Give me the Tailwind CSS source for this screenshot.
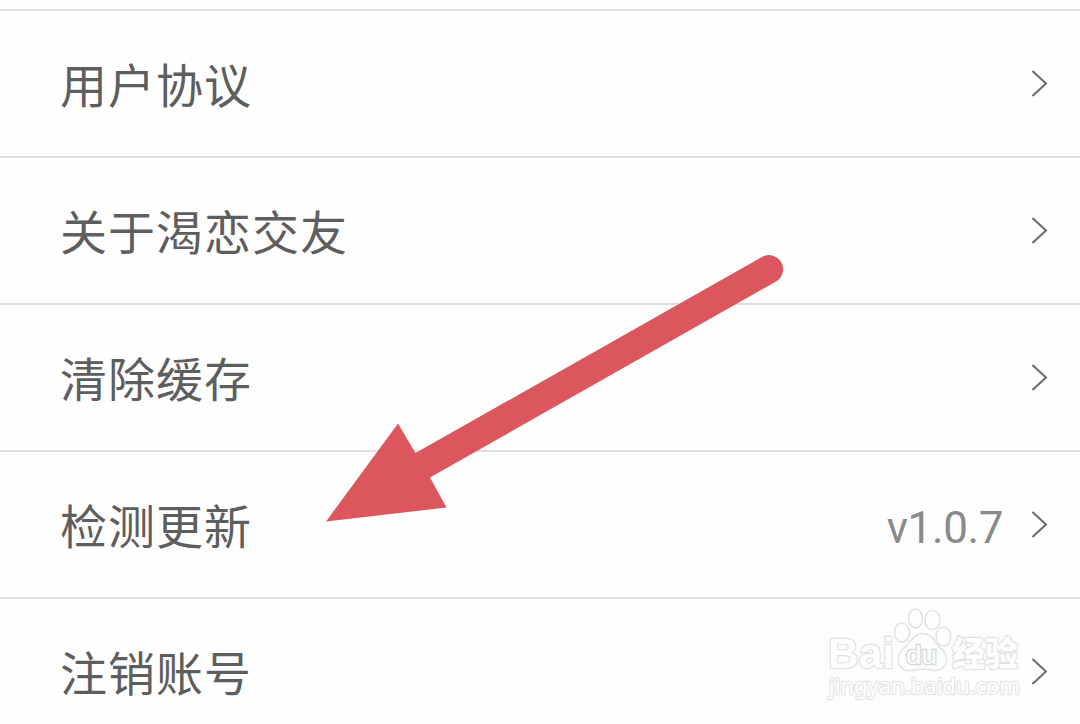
<!DOCTYPE html>
<html lang="zh-CN">
<head>
<meta charset="utf-8">
<title>设置</title>
<script src="https://cdn.jsdelivr.net/npm/@tailwindcss/browser@4"></script>
</head>
<body class="bg-[#fefefe]">
<main class="relative h-[724px] w-[1080px] overflow-hidden bg-[#fefefe] pt-[9px] font-['Noto_Sans_CJK_SC',sans-serif] text-[47px] leading-[68px] tracking-[1px] text-[#5e5e5e]">
  <div class="flex h-[147px] items-center justify-between border-t-2 border-[#dedede] pr-[32px] pl-[60px]">
    <span class="mb-px">用户协议</span>
    <svg class="mb-px h-7 w-4" viewBox="0 0 16 28" fill="none" stroke="#6c6c6c" stroke-width="2"><path d="M.5 2 14 14.500 .5 27"/></svg>
  </div>
  <div class="flex h-[147px] items-center justify-between border-t-2 border-[#dedede] pr-[32px] pl-[60px]">
    <span class="mb-px">关于渴恋交友</span>
    <svg class="mb-px h-7 w-4" viewBox="0 0 16 28" fill="none" stroke="#6c6c6c" stroke-width="2"><path d="M.5 2 14 14.500 .5 27"/></svg>
  </div>
  <div class="flex h-[147px] items-center justify-between border-t-2 border-[#dedede] pr-[32px] pl-[60px]">
    <span class="mb-px">清除缓存</span>
    <svg class="mb-px h-7 w-4" viewBox="0 0 16 28" fill="none" stroke="#6c6c6c" stroke-width="2"><path d="M.5 2 14 14.500 .5 27"/></svg>
  </div>
  <div class="flex h-[147px] items-center border-t-2 border-[#dedede] pr-[32px] pl-[60px]">
    <span class="mb-px flex-1">检测更新</span>
    <span class="mt-[6px] mr-[29px] font-['Roboto',sans-serif] text-[44px] tracking-[-0.4px] text-[#8a8a8a]">v1.0.7</span>
    <svg class="mb-px h-7 w-4" viewBox="0 0 16 28" fill="none" stroke="#6c6c6c" stroke-width="2"><path d="M.5 2 14 14.500 .5 27"/></svg>
  </div>
  <div class="flex h-[147px] items-center justify-between border-t-2 border-[#dedede] pr-[32px] pl-[60px]">
    <span class="mb-px">注销账号</span>
    <svg class="mb-px h-7 w-4" viewBox="0 0 16 28" fill="none" stroke="#6c6c6c" stroke-width="2"><path d="M.5 2 14 14.500 .5 27"/></svg>
  </div>

  <svg class="absolute top-[250px] left-[320px]" width="470" height="280" viewBox="320 250 470 280">
    <path d="M326 521.500 398 423.500 415.500 453 762 257A14 14 0 0 1 776 281.500L430 477.500 446.500 507.500Z" fill="#dc565d"/>
  </svg>

  <svg class="absolute top-[600px] left-[820px]" width="210" height="110" viewBox="820 600 210 110" fill="#fefefe" stroke="#e2e2e2" stroke-width="1.500" letter-spacing="0">
    <g paint-order="stroke" stroke-width="2.500" stroke-linejoin="round">
      <text x="828" y="668" font-family="Liberation Sans" font-weight="700" font-size="43" textLength="66" lengthAdjust="spacingAndGlyphs">Bai</text>
      <text x="952" y="666" font-family="Noto Sans CJK SC" font-weight="900" font-size="34" textLength="66" lengthAdjust="spacingAndGlyphs">经验</text>
      <text x="829" y="694" font-family="Noto Sans" font-size="22" stroke="#e6e6e6" textLength="191" lengthAdjust="spacingAndGlyphs">jingyan.baidu.com</text>
    </g>
    <ellipse cx="902" cy="632.500" rx="7.500" ry="9.500"/>
    <ellipse cx="915.500" cy="618.500" rx="7" ry="9.500"/>
    <ellipse cx="932.500" cy="620" rx="7.500" ry="9.500"/>
    <ellipse cx="943.500" cy="636.500" rx="7.500" ry="9.500"/>
    <path d="M922 633.500C914 633.500 911 642 904 648C895 656 897 670 909 670.500C916 670.500 921 668 929 669.500C940 673 947 667 946.500 658C946 650 938 648 934 640C931 635 927 633.500 922 633.500Z"/>
    <text x="906" y="664" font-family="Liberation Sans" font-weight="400" font-size="26" textLength="31" lengthAdjust="spacingAndGlyphs" paint-order="stroke" stroke="#d6d6d6" stroke-width="2.500">du</text>
  </svg>
</main>
</body>
</html>
